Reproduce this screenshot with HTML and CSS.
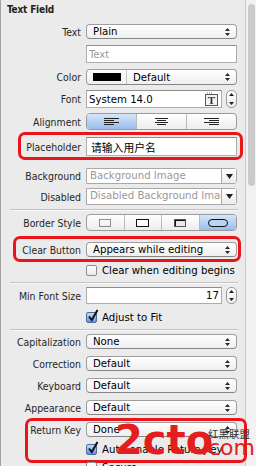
FILE: index.html
```html
<!DOCTYPE html>
<html lang="zh-CN">
<head>
  <meta charset="UTF-8">
  <title>Text Field</title>
  <link rel="stylesheet" href="styles.css">
</head>
<body>
<div class="inspector">
  <div class="pane">
    <div class="title">Text Field</div>

    <div class="row mt6">
      <span class="label">Text</span>
      <div class="popup"><span>Plain</span><svg class="arrows" width="5" height="8" viewBox="0 0 5 8"><path d="M0 3L2.5 0 5 3zM0 5L2.5 8 5 5z"/></svg></div>
    </div>

    <div class="row mt6">
      <span class="label"></span>
      <div class="textbox"><span class="hint">Text</span></div>
    </div>

    <div class="row mt6">
      <span class="label">Color</span>
      <div class="popup tall"><span class="swatch"></span><span class="split"></span><span>Default</span><svg class="arrows" width="5" height="8" viewBox="0 0 5 8"><path d="M0 3L2.5 0 5 3zM0 5L2.5 8 5 5z"/></svg></div>
    </div>

    <div class="row mt5">
      <span class="label">Font</span>
      <div class="textbox short"><span>System 14.0</span>
        <svg class="fonticon" width="13" height="14" viewBox="0 0 13 14">
          <rect x="0.5" y="2.5" width="12" height="11" fill="#f4f4f4" stroke="#555"/>
          <path d="M2 1h1M4 1h1M6 1h1" stroke="#777"/>
          <text x="6.5" y="12" text-anchor="middle" font-family="Liberation Serif, serif" font-weight="bold" font-size="11" fill="#333">T</text>
        </svg>
      </div>
      <div class="stepper"><svg width="5" height="14" viewBox="0 0 5 14"><path d="M0 4L2.5 1 5 4zM0 10L2.5 13 5 10z"/></svg></div>
    </div>

    <div class="row mt5">
      <span class="label">Alignment</span>
      <div class="segments">
        <span class="on"><svg width="15" height="8" viewBox="0 0 15 8"><path d="M0 .5h15M0 2.5h10M0 4.5h15M0 6.5h10" stroke="#222"/></svg></span>
        <span><svg width="13" height="8" viewBox="0 0 13 8"><path d="M0 .5h13M2 2.5h9M0 4.5h13M2 6.5h9" stroke="#222"/></svg></span>
        <span><svg width="15" height="8" viewBox="0 0 15 8"><path d="M0 .5h15M5 2.5h10M0 4.5h15M5 6.5h10" stroke="#222"/></svg></span>
      </div>
    </div>

    <div class="row mt7 marked mark-placeholder">
      <span class="label">Placeholder</span>
      <div class="textbox big"><span class="cjk">请输入用户名</span></div>
    </div>

    <div class="row mt12">
      <span class="label">Background</span>
      <div class="combo"><span class="entry">Background Image</span><span class="drop"><svg width="7" height="5" viewBox="0 0 7 5"><path d="M0 0h7L3.5 5z"/></svg></span></div>
    </div>

    <div class="row mt4">
      <span class="label">Disabled</span>
      <div class="combo tall"><span class="entry">Disabled Background Image</span><span class="drop"><svg width="7" height="5" viewBox="0 0 7 5"><path d="M0 0h7L3.5 5z"/></svg></span></div>
    </div>

    <div class="sep mt4"></div>

    <div class="row mt4">
      <span class="label">Border Style</span>
      <div class="segments">
        <span><svg width="12" height="8" viewBox="0 0 12 8"><rect x="0.5" y="0.5" width="11" height="7" fill="none" stroke="#222" stroke-dasharray="1 1"/></svg></span>
        <span><svg width="13" height="8" viewBox="0 0 13 8"><rect x="0.5" y="0.5" width="12" height="7" fill="#fff" stroke="#111"/></svg></span>
        <span><svg width="12" height="8" viewBox="0 0 12 8"><rect x="0.5" y="0.5" width="11" height="7" fill="#e8e8e8" stroke="#555"/><path d="M1 1.5h10M1.5 1v6" stroke="#111"/></svg></span>
        <span class="on"><svg width="20" height="8" viewBox="0 0 20 8"><rect x="0.5" y="0.5" width="19" height="7" rx="3.5" fill="#b9d3f4" stroke="#111"/></svg></span>
      </div>
    </div>

    <div class="row mt11 marked mark-clear">
      <span class="label">Clear Button</span>
      <div class="popup"><span>Appears while editing</span><svg class="arrows" width="5" height="8" viewBox="0 0 5 8"><path d="M0 3L2.5 0 5 3zM0 5L2.5 8 5 5z"/></svg></div>
    </div>

    <div class="check mt8"><span class="box"></span>Clear when editing begins</div>

    <div class="sep mt6"></div>

    <div class="row mt4">
      <span class="label">Min Font Size</span>
      <div class="textbox short num"><span>17</span></div>
      <div class="stepper low"><svg width="5" height="13" viewBox="0 0 5 13"><path d="M0 4L2.5 1 5 4zM0 9L2.5 12 5 9z"/></svg></div>
    </div>

    <div class="check mt8"><span class="box checked"><svg width="12" height="14" viewBox="0 0 12 14"><path d="M2 7.5L4.8 11 10.5 1" fill="none" stroke="#111" stroke-width="2"/></svg></span>Adjust to Fit</div>

    <div class="sep mt6"></div>

    <div class="row mt4">
      <span class="label">Capitalization</span>
      <div class="popup"><span>None</span><svg class="arrows" width="5" height="8" viewBox="0 0 5 8"><path d="M0 3L2.5 0 5 3zM0 5L2.5 8 5 5z"/></svg></div>
    </div>

    <div class="row mt7">
      <span class="label">Correction</span>
      <div class="popup"><span>Default</span><svg class="arrows" width="5" height="8" viewBox="0 0 5 8"><path d="M0 3L2.5 0 5 3zM0 5L2.5 8 5 5z"/></svg></div>
    </div>

    <div class="row mt7">
      <span class="label">Keyboard</span>
      <div class="popup"><span>Default</span><svg class="arrows" width="5" height="8" viewBox="0 0 5 8"><path d="M0 3L2.5 0 5 3zM0 5L2.5 8 5 5z"/></svg></div>
    </div>

    <div class="row mt7">
      <span class="label">Appearance</span>
      <div class="popup"><span>Default</span><svg class="arrows" width="5" height="8" viewBox="0 0 5 8"><path d="M0 3L2.5 0 5 3zM0 5L2.5 8 5 5z"/></svg></div>
    </div>

    <div class="group marked mark-return">
      <div class="row">
        <span class="label">Return Key</span>
        <div class="popup"><span>Done</span><svg class="arrows" width="5" height="8" viewBox="0 0 5 8"><path d="M0 3L2.5 0 5 3zM0 5L2.5 8 5 5z"/></svg></div>
      </div>
      <div class="check mt7"><span class="box checked"><svg width="12" height="14" viewBox="0 0 12 14"><path d="M2 7.5L4.8 11 10.5 1" fill="none" stroke="#111" stroke-width="2"/></svg></span>Auto-enable Return Key</div>
    </div>

    <div class="check mt7"><span class="box"></span>Secure</div>
  </div>

  <div class="scroller"><div class="thumb"></div></div>

  <div class="watermark">
    <span class="wm-big">2cto</span>
    <span class="wm-com">.com</span>
    <span class="wm-cn">红黑联盟</span>
  </div>
</div>
</body>
</html>
```

FILE: styles.css
```css
body { margin: 0; background: #ebebeb; font-family: "DejaVu Sans Condensed", "DejaVu Sans", sans-serif; font-stretch: condensed; }

.inspector { position: relative; display: flex; width: 256px; height: 466px; overflow: hidden; background: #ebebeb; }
.pane { width: 244px; border-left: 1px solid #a2a2a2; }
.scroller { width: 10px; border-left: 1px solid #cacaca; background: #f2f2f2; }
.thumb { margin: 4px 1px 0 2px; height: 182px; border-radius: 4px; background: #cbcbcb; }

.title { height: 14px; padding: 4px 0 0 6px; line-height: 12px; font-size: 10px; font-weight: bold; letter-spacing: -0.2px; color: #222; }

/* rows: label column + control */
.row { position: relative; display: flex; align-items: center; }
.label { width: 80px; text-align: right; font-size: 10.4px; color: #262626; white-space: nowrap; }

.mt4 { margin-top: 4px; }
.mt5 { margin-top: 5px; }
.mt6 { margin-top: 6px; }
.mt7 { margin-top: 7px; }
.mt8 { margin-top: 8px; }
.mt11 { margin-top: 11px; }
.mt12 { margin-top: 12px; }

.popup {
  display: flex;
  align-items: center;
  width: 151px;
  height: 15px;
  box-sizing: border-box;
  margin-left: 5px;
  padding-left: 6px;
  border: 1px solid #9e9e9e;
  border-bottom-color: #868686;
  border-radius: 4px;
  background: linear-gradient(#ffffff, #efefef);
  font-size: 11.3px;
  color: #000;
  white-space: nowrap;
}
.popup.tall { height: 16px; }
.arrows { margin-left: auto; margin-right: 6px; fill: #2a2a2a; }
.swatch { width: 28px; height: 8px; background: #000; }
.split { width: 1px; height: 14px; margin: 0 6px 0 5px; background: #c4c4c4; }

.textbox {
  display: flex;
  align-items: center;
  width: 151px;
  height: 18px;
  box-sizing: border-box;
  margin-left: 5px;
  padding: 0 2px;
  background: #fff;
  border: 1px solid #adadad;
  border-top-color: #8e8e8e;
  font-size: 11.3px;
  color: #000;
  white-space: nowrap;
}
.textbox.short { width: 136px; }
.textbox.big { height: 19px; padding-left: 4px; }
.textbox.num { height: 17px; justify-content: flex-end; }
.hint { color: #9b9b9b; }
.cjk { font-family: "Noto Sans CJK SC", sans-serif; font-size: 10.8px; }
.fonticon { margin-left: auto; margin-right: 1px; }

.stepper {
  display: flex;
  align-items: center;
  justify-content: center;
  width: 11px;
  height: 18px;
  box-sizing: border-box;
  margin-left: 4px;
  border: 1px solid #9a9a9a;
  border-radius: 5px;
  background: linear-gradient(#fff, #ececec);
  fill: #222;
}
.stepper.low { height: 17px; }

.segments {
  display: flex;
  width: 151px;
  height: 17px;
  box-sizing: border-box;
  margin-left: 5px;
  border: 1px solid #9b9b9b;
  border-radius: 4px;
  overflow: hidden;
  background: linear-gradient(#ffffff, #ededed);
}
.segments span { flex: 1; display: flex; align-items: center; justify-content: center; border-left: 1px solid #b9b9b9; }
.segments span:first-child { border-left: 0; }
.segments .on { background: linear-gradient(#d6e6fa, #97bdee); }

.combo {
  display: flex;
  width: 151px;
  height: 16px;
  box-sizing: border-box;
  margin-left: 5px;
  border: 1px solid #a9a9a9;
  border-radius: 0 3px 3px 0;
  background: #fff;
  font-size: 11.3px;
}
.combo.tall { height: 17px; }
.entry { flex: 1; padding-left: 3px; overflow: hidden; white-space: nowrap; color: #999; line-height: 14px; }
.drop { display: flex; align-items: center; justify-content: center; width: 14px; border-left: 1px solid #a9a9a9; background: linear-gradient(#fff, #ebebeb); fill: #222; }

.sep { width: 228px; height: 1px; margin-left: 9px; background: #c4c4c4; box-shadow: 0 1px 0 #f7f7f7; }

.check { display: flex; align-items: center; height: 11px; margin-left: 85px; font-size: 11.3px; color: #000; white-space: nowrap; }
.box {
  position: relative;
  width: 11px;
  height: 11px;
  box-sizing: border-box;
  margin-right: 5px;
  border: 1px solid #8c8c8c;
  border-radius: 2px;
  background: linear-gradient(#fff, #e9e9e9);
}
.box.checked { border-color: #4e6d9e; background: linear-gradient(#c3dafa, #5b93e0); }
.box svg { position: absolute; left: 0; top: -4px; }

.group { position: relative; display: flex; flex-direction: column; margin-top: 7px; }

/* red highlight frames drawn over the screenshot */
.marked::before { content: ""; position: absolute; border: 3px solid #e8161b; border-radius: 7px; }
.mark-placeholder::before { left: 17px; right: 2px; top: -5px; bottom: -4px; }
.mark-clear::before { left: 12px; right: 4px; top: -6px; bottom: -5px; }
.mark-return::before { left: 24px; right: -2px; top: -4px; bottom: -8px; }

.watermark { position: absolute; left: 0; top: 0; width: 256px; height: 466px; color: #e31e1e; }
.wm-big { position: absolute; left: 115px; top: 420px; font: bold 40px/1 "DejaVu Sans", sans-serif; font-stretch: normal; }
.wm-com { position: absolute; left: 201px; top: 437px; font: 22px/1 "DejaVu Sans", sans-serif; font-stretch: normal; }
.wm-cn { position: absolute; left: 208px; top: 429px; font: 10.5px/1 "Noto Sans CJK SC", sans-serif; color: #333; }
```
